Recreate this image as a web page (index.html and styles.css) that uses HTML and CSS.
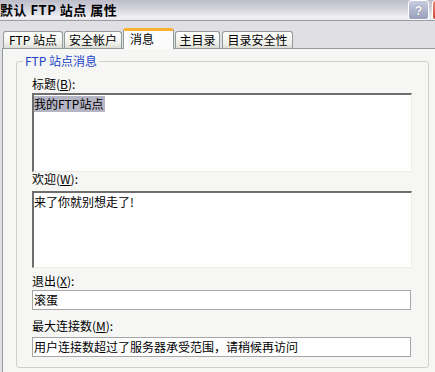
FILE: index.html
```html
<!DOCTYPE html>
<html lang="zh-CN">
<head>
<meta charset="utf-8">
<title>默认 FTP 站点 属性</title>
<link rel="stylesheet" href="styles.css">
</head>
<body>
<div class="window">
  <div class="titlebar">
    <span class="title">默认 FTP 站点 属性</span>
    <div class="caption-btns">
      <span class="help">?</span>
      <span class="close"><svg width="11" height="11" viewBox="0 0 11 11"><path d="M1.5 1.5 L9.5 9.5 M9.5 1.5 L1.5 9.5" stroke="#ffffff" stroke-width="2" fill="none"/></svg></span>
    </div>
  </div>
  <div class="client">
    <div class="tabs">
      <div class="tab tab-ftp">FTP 站点</div>
      <div class="tab tab-acct">安全帐户</div>
      <div class="tab tab-msg active">消息</div>
      <div class="tab tab-home">主目录</div>
      <div class="tab tab-sec">目录安全性</div>
    </div>
    <div class="panel">
      <fieldset class="group">
        <legend>FTP 站点消息</legend>
        <div class="label first">标题(<u>B</u>):</div>
        <div class="memo memo-title"><span class="sel">我的FTP站点</span></div>
        <div class="label">欢迎(<u>W</u>):</div>
        <div class="memo memo-welcome">来了你就别想走了!</div>
        <div class="label l-exit">退出(<u>X</u>):</div>
        <div class="field">滚蛋</div>
        <div class="label l-max">最大连接数(<u>M</u>):</div>
        <div class="field">用户连接数超过了服务器承受范围，请稍候再访问</div>
      </fieldset>
    </div>
  </div>
</div>
</body>
</html>
```
FILE: styles.css
```css
html, body {
  margin: 0;
  padding: 0;
  width: 435px;
  height: 372px;
  overflow: hidden;
  background: #e0dfe3;
}
.window {
  width: 435px;
  height: 372px;
  font-family: "Noto Sans CJK SC", "Liberation Sans", sans-serif;
  font-size: 12px;
  color: #000;
}
.titlebar {
  height: 20px;
  display: flex;
  align-items: center;
  justify-content: space-between;
  background: linear-gradient(to bottom, #bdbdc9 0%, #d4d4de 45%, #f2f2f6 90%, #e6e6ec 100%);
  border-bottom: 1px solid #9c9ca4;
}
.title {
  font-weight: bold;
  font-size: 13px;
  line-height: 16px;
  margin-left: 0;
  letter-spacing: 0.5px;
  white-space: pre;
}
.caption-btns {
  display: flex;
  align-self: flex-start;
  gap: 3px;
  margin-right: -18px;
}
.help, .close {
  width: 19px;
  height: 18px;
  border: 1px solid #ffffff;
  border-radius: 3px;
  display: flex;
  align-items: center;
  justify-content: center;
  font-family: "Liberation Sans", sans-serif;
  font-weight: bold;
  font-size: 13px;
}
.help {
  background: linear-gradient(to bottom, #c8cce0, #9aa0bc);
  color: #ffffff;
  text-shadow: 0 0 1px #505870;
}
.close {
  background: linear-gradient(to bottom, #e88a7a, #c8452e);
}
.client {
  padding: 8px 0 0 2px;
}
.tabs {
  display: flex;
  align-items: flex-end;
  height: 19px;
  padding-left: 1px;
  gap: 1px;
  position: relative;
  z-index: 2;
}
.tab {
  height: 17px;
  box-sizing: border-box;
  border: 1px solid #919b9c;
  border-bottom: none;
  border-radius: 3px 3px 0 0;
  background: linear-gradient(to bottom, #ffffff, #f0f0ea 70%, #dcdcd6);
  text-align: center;
  line-height: 16px;
  white-space: pre;
}
.tab-ftp { width: 60px; }
.tab-acct { width: 58px; }
.tab-home { width: 45px; }
.tab-sec { width: 71px; margin-left: 1px; }
.tab.active {
  width: 51px;
  height: 21px;
  margin: 0 0 -1px 0;
  background: #fbfbfb;
  border-top: 3px solid #f9b230;
  line-height: 16px;
  text-align: left;
  padding-left: 6px;
}
.panel {
  width: 440px;
  height: 330px;
  box-sizing: border-box;
  border: 1px solid #919b9c;
  background: #f6f6f4;
  padding: 6px 0 0 13px;
}
.group {
  width: 413px;
  height: 313px;
  box-sizing: border-box;
  margin: 0;
  border: 1px solid #cfd0c8;
  border-radius: 3px;
  padding: 0 15px 0 15px;
}
.group legend {
  color: #1a44c8;
  padding: 0 2px;
  margin-left: -9px;
  line-height: 12px;
  font-size: 12px;
}
.label {
  line-height: 14px;
  height: 14px;
  margin: 0 0 5px 0;
}
.label.first {
  margin-top: 10px;
  margin-bottom: 2px;
}
.label.l-exit {
  margin-top: 6px;
  margin-bottom: 2px;
}
.label.l-max {
  margin-top: 9px;
  margin-bottom: 4px;
}
.memo {
  width: 380px;
  box-sizing: border-box;
  background: #ffffff;
  border-top: 2px solid #6e6e6e;
  border-left: 2px solid #6e6e6e;
  border-right: 1px solid #ecebe2;
  border-bottom: 1px solid #ecebe2;
  padding: 1px 0 0 0;
  line-height: 16px;
}
.memo-title { height: 79px; }
.memo-welcome { height: 77px; margin-top: 0; }
.sel {
  background: #b4b4c4;
  display: inline-block;
  padding-right: 2px;
}
.field {
  width: 379px;
  height: 20px;
  box-sizing: border-box;
  background: #ffffff;
  border: 1px solid #a6a6a6;
  padding-left: 1px;
  line-height: 17px;
  white-space: nowrap;
  overflow: hidden;
}
```
